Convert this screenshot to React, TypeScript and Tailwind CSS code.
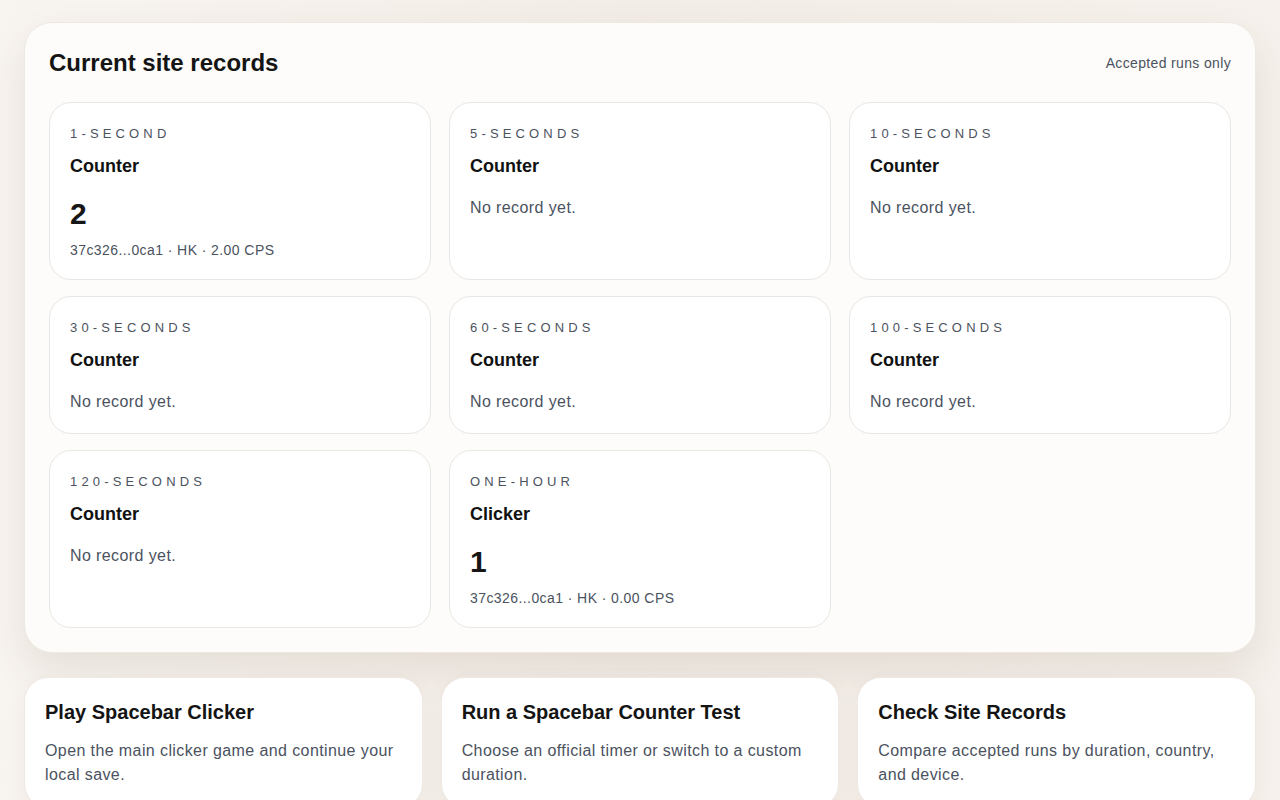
type RecordItem = {
  label: string;
  mode: string;
  score?: number;
  meta?: string;
};

const records: RecordItem[] = [
  { label: '1-second', mode: 'Counter', score: 2, meta: '37c326...0ca1 · HK · 2.00 CPS' },
  { label: '5-seconds', mode: 'Counter' },
  { label: '10-seconds', mode: 'Counter' },
  { label: '30-seconds', mode: 'Counter' },
  { label: '60-seconds', mode: 'Counter' },
  { label: '100-seconds', mode: 'Counter' },
  { label: '120-seconds', mode: 'Counter' },
  { label: 'one-hour', mode: 'Clicker', score: 1, meta: '37c326...0ca1 · HK · 0.00 CPS' },
];

const links = [
  { title: 'Play Spacebar Clicker', text: 'Open the main clicker game and continue your local save.' },
  { title: 'Run a Spacebar Counter Test', text: 'Choose an official timer or switch to a custom duration.' },
  { title: 'Check Site Records', text: 'Compare accepted runs by duration, country, and device.' },
];

function RecordCard({ item }: { item: RecordItem }) {
  return (
    <div className="flex flex-col rounded-[22px] border border-[#e9e7e4] bg-white px-5 pt-[21px] pb-[19px]">
      <span className="text-[13px] leading-5 uppercase tracking-[0.32em] text-[#4b5260]">{item.label}</span>
      <span className="mt-2 text-lg leading-7 font-bold text-[#111111]">{item.mode}</span>
      {item.score !== undefined ? (
        <>
          <span className="mt-4 text-[30px] leading-9 font-bold text-[#161616]">{item.score}</span>
          <span className="mt-2 text-sm leading-5 tracking-[0.03em] text-[#4b5260]">{item.meta}</span>
        </>
      ) : (
        <span className="mt-4 text-base leading-6 tracking-[0.025em] text-[#4b5260]">No record yet.</span>
      )}
    </div>
  );
}

export default function App() {
  return (
    <div
      className="min-h-[800px] bg-gradient-to-r from-[#f8f4f0] via-[#f3ede7] to-[#f6f1ec] px-6 pt-[22px] pb-10"
      style={{ fontFamily: '"Liberation Sans", Arial, sans-serif' }}
    >
      <section className="rounded-[28px] border border-[#ede8e2] bg-[#fdfcfa] p-6 shadow-[0_18px_40px_rgba(90,60,30,0.10)]">
        <div className="flex items-center justify-between">
          <h2 className="text-2xl leading-8 font-bold text-[#141414]">Current site records</h2>
          <span className="text-sm tracking-[0.025em] text-[#4b5260]">Accepted runs only</span>
        </div>
        <div className="mt-[23px] grid grid-cols-3 gap-x-[18px] gap-y-4">
          {records.map(r => (
            <RecordCard key={r.label} item={r} />
          ))}
        </div>
      </section>

      <div className="mt-6 grid grid-cols-3 gap-[18px]">
        {links.map(l => (
          <div key={l.title} className="rounded-[24px] border border-[#eee9e3] bg-white p-5 shadow-[0_8px_24px_rgba(90,60,30,0.05)]">
            <h3 className="text-xl leading-7 font-bold text-[#141414]">{l.title}</h3>
            <p className="mt-[13px] text-base leading-6 tracking-[0.025em] text-[#4b5260]">{l.text}</p>
          </div>
        ))}
      </div>
    </div>
  );
}
